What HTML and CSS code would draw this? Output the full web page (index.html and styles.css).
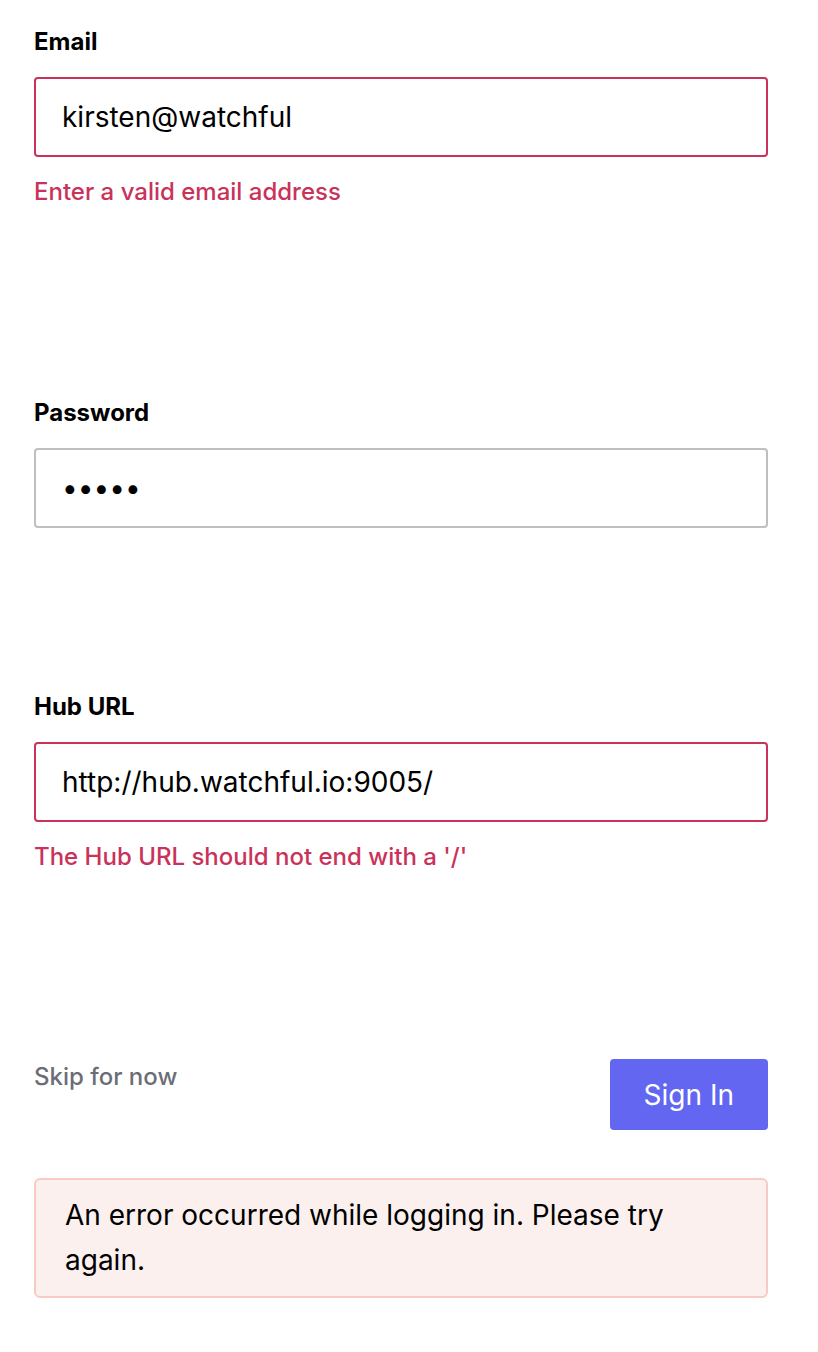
FILE: index.html
```html
<!DOCTYPE html>
<html lang="en">
<head>
<meta charset="utf-8">
<title>Sign In</title>
<link rel="stylesheet" href="styles.css">
</head>
<body>
<form class="login">
  <div class="field field-email">
    <label class="label" for="email">Email</label>
    <input class="input input-invalid" id="email" type="text" value="kirsten@watchful">
    <p class="error-text">Enter a valid email address</p>
  </div>
  <div class="field field-password">
    <label class="label" for="password">Password</label>
    <input class="input" id="password" type="password" value="abcde">
  </div>
  <div class="field field-hub">
    <label class="label" for="hub">Hub URL</label>
    <input class="input input-invalid" id="hub" type="text" value="http://hub.watchful.io:9005/">
    <p class="error-text">The Hub URL should not end with a '/'</p>
  </div>
  <div class="actions">
    <a class="skip" href="#">Skip for now</a>
    <button class="btn-primary" type="button">Sign In</button>
  </div>
  <div class="alert">An error occurred while logging in. Please try again.</div>
</form>
</body>
</html>
```
FILE: styles.css
```css
html, body {
  margin: 0;
  padding: 0;
  background: #ffffff;
}
body {
  font-family: Inter, "Noto Sans", sans-serif;
  color: #000000;
}
.login {
  width: 734px;
  padding: 27px 0 0 34px;
  display: flex;
  flex-direction: column;
}
.field {
  display: flex;
  flex-direction: column;
}
.field-email { margin-bottom: 192px; }
.field-password { margin-bottom: 164px; }
.field-hub { margin-bottom: 188px; }
.label {
  font-size: 24px;
  line-height: 29px;
  font-weight: 700;
  color: #000;
  margin-bottom: 21px;
}
.input {
  box-sizing: border-box;
  height: 80px;
  width: 100%;
  margin: 0;
  padding: 0 26px;
  border: 2px solid #bfbfbf;
  border-radius: 4px;
  font-family: Inter, "Noto Sans", sans-serif;
  font-size: 28px;
  color: #000;
  background: #fff;
  outline: none;
}
.input-invalid {
  border-color: #c9325a;
}
.error-text {
  margin: 20px 0 0;
  font-size: 24px;
  line-height: 29px;
  font-weight: 500;
  color: #c9325a;
}
.actions {
  display: flex;
  justify-content: space-between;
  align-items: flex-start;
  margin-bottom: 48px;
}
.skip {
  margin-top: 3px;
  font-size: 24px;
  line-height: 29px;
  font-weight: 500;
  color: #6b6e76;
  text-decoration: none;
}
.btn-primary {
  height: 71px;
  padding: 0 34px;
  border: none;
  border-radius: 4px;
  background: #6366f1;
  color: #fff;
  font-family: Inter, "Noto Sans", sans-serif;
  font-size: 28px;
  font-weight: 400;
}
.alert {
  box-sizing: border-box;
  padding: 13px 29px;
  border: 2px solid #f7cbc3;
  border-radius: 6px;
  background: #fcf0ef;
  font-size: 28px;
  line-height: 1.6;
  color: #000;
}
```
